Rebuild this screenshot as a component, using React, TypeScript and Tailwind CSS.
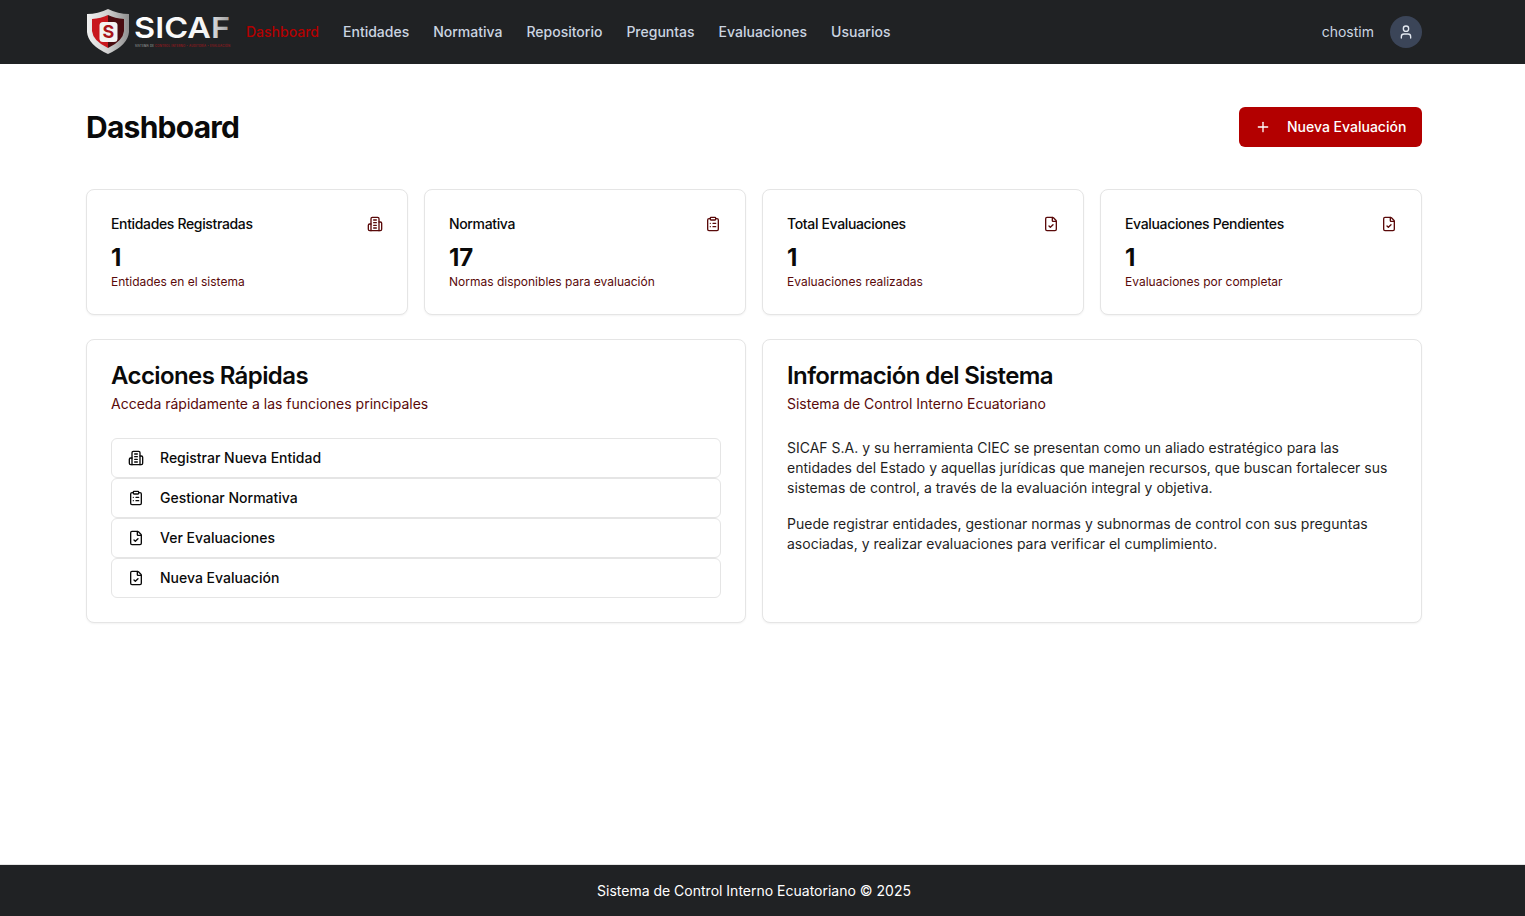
import { ClipboardList, FileCheck, Plus, User } from "lucide-react";

function Building({ className }: { className?: string }) {
  return (
    <svg viewBox="0 0 24 24" fill="none" stroke="currentColor" strokeWidth="2" strokeLinecap="round" strokeLinejoin="round" className={className}>
      <path d="M6 22V4a2 2 0 0 1 2-2h8a2 2 0 0 1 2 2v18Z" />
      <path d="M6 12H4a2 2 0 0 0-2 2v6a2 2 0 0 0 2 2h2" />
      <path d="M18 9h2a2 2 0 0 1 2 2v9a2 2 0 0 1-2 2h-2" />
      <path d="M10 6h4" />
      <path d="M10 10h4" />
      <path d="M10 14h4" />
      <path d="M10 18h4" />
    </svg>
  );
}

const nav = ["Entidades", "Normativa", "Repositorio", "Preguntas", "Evaluaciones", "Usuarios"];

const stats = [
  { title: "Entidades Registradas", value: "1", sub: "Entidades en el sistema", Icon: Building },
  { title: "Normativa", value: "17", sub: "Normas disponibles para evaluación", Icon: ClipboardList },
  { title: "Total Evaluaciones", value: "1", sub: "Evaluaciones realizadas", Icon: FileCheck },
  { title: "Evaluaciones Pendientes", value: "1", sub: "Evaluaciones por completar", Icon: FileCheck },
];

const actions = [
  { label: "Registrar Nueva Entidad", Icon: Building },
  { label: "Gestionar Normativa", Icon: ClipboardList },
  { label: "Ver Evaluaciones", Icon: FileCheck },
  { label: "Nueva Evaluación", Icon: FileCheck },
];

function Logo() {
  return (
    <svg width="146" height="48" viewBox="0 0 146 48" className="shrink-0">
      <defs>
        <linearGradient id="rim" x1="0" y1="0" x2="1" y2="0">
          <stop offset="0" stopColor="#f0f0f0" />
          <stop offset="0.5" stopColor="#d0d0d0" />
          <stop offset="1" stopColor="#8f8f8f" />
        </linearGradient>
        <linearGradient id="word" x1="0" y1="0" x2="1" y2="0">
          <stop offset="0" stopColor="#ffffff" />
          <stop offset="0.75" stopColor="#f4f4f4" />
          <stop offset="1" stopColor="#9a9a9a" />
        </linearGradient>
      </defs>
      <path d="M1 6 Q12 6 22 1 Q32 6 43 6 L43 24 Q42 37 22 46 Q2 37 1 24 Z" fill="url(#rim)" />
      <path d="M6 11 Q15 10.5 22 7 L22 40 Q7 33 6 23 Z" fill="#c8161d" />
      <path d="M22 7 Q29 10.5 38 11 L38 23 Q37 33 22 40 Z" fill="#4a0c10" />
      <rect x="13.5" y="14" width="18" height="20" rx="3.5" fill="#f3f3f3" />
      <text x="22.5" y="30" textAnchor="middle" fontFamily="Inter, sans-serif" fontWeight="700" fontSize="18" fill="#a8141a">S</text>
      <text x="48" y="30" fontFamily="Inter, sans-serif" fontWeight="600" fontSize="29" fill="url(#word)" textLength="96" lengthAdjust="spacingAndGlyphs">SICAF</text>
      <text x="49" y="39" fontFamily="Inter, sans-serif" fontWeight="500" fontSize="2.8" fill="#9d9d9d" textLength="19">SISTEMA DE</text>
      <text x="69" y="39" fontFamily="Inter, sans-serif" fontWeight="500" fontSize="2.8" fill="#a3181e" textLength="75">CONTROL INTERNO • AUDITORÍA • EVALUACIÓN</text>
    </svg>
  );
}

export default function App() {
  return (
    <div className="min-h-[916px] flex flex-col bg-white font-['Inter',sans-serif] text-[#0a0a0a]">
      <header className="h-16 bg-[#202224] pr-[17px]">
        <div className="mx-auto h-full max-w-[1400px] px-8 flex items-center justify-between">
          <div className="flex items-center">
            <Logo />
            <nav className="ml-[14px] flex items-center gap-6 text-sm font-medium text-[#cbd5e1]">
              <span className="text-[#b30000]">Dashboard</span>
              {nav.map((n) => (
                <span key={n}>{n}</span>
              ))}
            </nav>
          </div>
          <div className="flex items-center gap-4">
            <span className="text-sm text-[#cbd5e1]">chostim</span>
            <div className="w-8 h-8 rounded-full bg-[#3b4558] flex items-center justify-center">
              <User className="w-4 h-4 text-[#e2e8f0]" />
            </div>
          </div>
        </div>
      </header>

      <main className="flex-1 pr-[17px]">
        <div className="mx-auto max-w-[1400px] px-8 pt-[43px]">
          <div className="flex items-center justify-between h-10 mb-[42px]">
            <h1 className="text-3xl font-bold tracking-[-0.75px]">Dashboard</h1>
            <button className="h-10 w-[183px] rounded-md bg-[#b30000] pl-4 flex items-center gap-4 text-sm font-medium text-white">
              <Plus className="w-4 h-4" />
              Nueva Evaluación
            </button>
          </div>

          <div className="grid grid-cols-4 gap-4 mb-6">
            {stats.map(({ title, value, sub, Icon }) => (
              <div key={title} className="h-[126px] rounded-lg border border-[#e5e5e5] bg-white shadow-xs px-6 pt-6">
                <div className="flex items-center justify-between h-5">
                  <span className="text-sm font-medium leading-5 tracking-tight">{title}</span>
                  <Icon className="w-4 h-4 text-[#5a0a0a]" />
                </div>
                <div className="mt-2 text-2xl font-bold leading-8">{value}</div>
                <div className="text-xs leading-4 text-[#5a0a0a]">{sub}</div>
              </div>
            ))}
          </div>

          <div className="grid grid-cols-2 gap-4">
            <section className="h-[284px] rounded-lg border border-[#e5e5e5] bg-white shadow-xs p-6">
              <h2 className="text-2xl font-semibold leading-6 tracking-[-0.6px]">Acciones Rápidas</h2>
              <p className="mt-[6px] text-sm leading-5 text-[#5a0a0a]">Acceda rápidamente a las funciones principales</p>
              <div className="mt-6 flex flex-col">
                {actions.map(({ label, Icon }) => (
                  <div key={label} className="h-10 rounded-md border border-[#e5e5e5] bg-white px-4 flex items-center gap-4 text-sm font-medium">
                    <Icon className="w-4 h-4" />
                    {label}
                  </div>
                ))}
              </div>
            </section>
            <section className="h-[284px] rounded-lg border border-[#e5e5e5] bg-white shadow-xs p-6">
              <h2 className="text-2xl font-semibold leading-6 tracking-[-0.6px]">Información del Sistema</h2>
              <p className="mt-[6px] text-sm leading-5 text-[#5a0a0a]">Sistema de Control Interno Ecuatoriano</p>
              <div className="mt-6 text-sm leading-5 text-[#1f1f1f]">
                <p>
                  SICAF S.A. y su herramienta CIEC se presentan como un aliado estratégico para las entidades del Estado y aquellas jurídicas que manejen recursos, que buscan fortalecer sus sistemas de control, a través de la evaluación integral y objetiva.
                </p>
                <p className="mt-4">
                  Puede registrar entidades, gestionar normas y subnormas de control con sus preguntas asociadas, y realizar evaluaciones para verificar el cumplimiento.
                </p>
              </div>
            </section>
          </div>
        </div>
      </main>

      <footer className="h-[52px] border-t border-[#e5e5e5] bg-[#202224] pr-[17px] flex items-center justify-center text-sm text-white">
        Sistema de Control Interno Ecuatoriano © 2025
      </footer>
    </div>
  );
}
